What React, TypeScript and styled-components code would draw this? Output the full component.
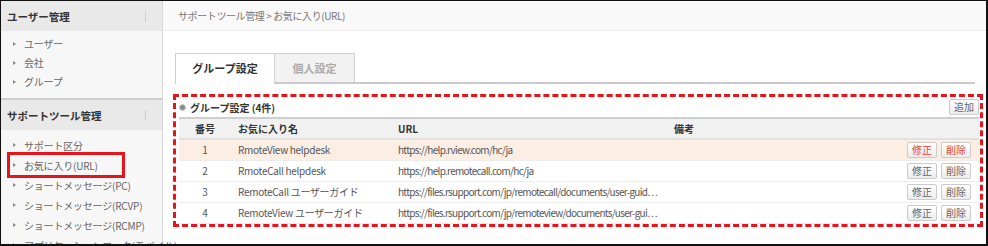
import styled, { createGlobalStyle } from 'styled-components';

const GlobalStyle = createGlobalStyle`
  html, body {
    margin: 0;
    padding: 0;
    background: #fff;
  }
  body {
    font-family: "Noto Sans CJK JP", "Noto Sans", sans-serif;
  }
`;

const Frame = styled.div`
  width: 988px;
  height: 246px;
  box-sizing: border-box;
  border: 1px solid #111;
  border-right-width: 2px;
  border-bottom-width: 2px;
  display: flex;
  overflow: hidden;
  background: #fff;
`;

const Sidebar = styled.aside`
  width: 162px;
  flex: none;
  box-sizing: border-box;
  background: #f7f7f7;
  border-right: 1px solid #d9d9d9;
`;

const SideHeader = styled.div<{ $divided?: boolean }>`
  height: 30px;
  display: flex;
  align-items: center;
  justify-content: space-between;
  padding: 0 16px 0 6px;
  background: #e9e9e9;
  border-top: ${({ $divided }) => ($divided ? '2px solid #cdcdcd' : 'none')};
  font-size: 10.5px;
  font-weight: 700;
  color: #333;
`;

const Tick = styled.span`
  width: 1px;
  height: 11px;
  background: #cfcfcf;
`;

const SideList = styled.ul<{ $top: number; $bottom: number }>`
  list-style: none;
  margin: 0;
  padding: ${({ $top, $bottom }) => `${$top}px 0 ${$bottom}px`};
`;

const SideItem = styled.li<{ $h: number; $marked?: boolean }>`
  display: flex;
  align-items: center;
  gap: 8px;
  height: ${({ $h }) => $h}px;
  margin-left: 9px;
  padding-left: 3px;
  width: ${({ $marked }) => ($marked ? '112px' : 'auto')};
  box-sizing: border-box;
  outline: ${({ $marked }) => ($marked ? '3px solid #e8141b' : 'none')};
  font-size: 10px;
  letter-spacing: -0.2px;
  color: #666;
  white-space: nowrap;
`;

const Arrow = styled.span`
  width: 0;
  height: 0;
  border-left: 3px solid #888;
  border-top: 2.5px solid transparent;
  border-bottom: 2.5px solid transparent;
`;

const Main = styled.main`
  flex: 1;
  display: flex;
  flex-direction: column;
  min-width: 0;
`;

const Breadcrumb = styled.div`
  height: 29px;
  flex: none;
  display: flex;
  align-items: center;
  padding-left: 15px;
  background: #f9f9f9;
  border-bottom: 1px solid #ececec;
  font-size: 10px;
  letter-spacing: -0.4px;
  color: #777;
`;

const Content = styled.div`
  padding: 22px 3px 0 10px;
`;

const Tabs = styled.div`
  display: flex;
  margin: 0 8px 0 2px;
  border-bottom: 2px solid #cacaca;
`;

const Tab = styled.div<{ $active?: boolean }>`
  box-sizing: border-box;
  width: ${({ $active }) => ($active ? '100px' : '80px')};
  height: ${({ $active }) => ($active ? '31px' : '29px')};
  display: flex;
  align-items: center;
  justify-content: center;
  border: 1px solid #cfcfcf;
  border-bottom: none;
  border-left-width: ${({ $active }) => ($active ? '1px' : '0')};
  background: ${({ $active }) => ($active ? '#fff' : '#f2f2f2')};
  margin-bottom: ${({ $active }) => ($active ? '-2px' : '0')};
  padding-bottom: ${({ $active }) => ($active ? '2px' : '0')};
  font-size: 11px;
  font-weight: 700;
  color: ${({ $active }) => ($active ? '#333' : '#aaa')};
`;

const Section = styled.section`
  margin-top: 10px;
  border: 3px dashed #e8141b;
  padding: 0 1px 0 3px;
`;

const TitleRow = styled.div`
  height: 20px;
  display: flex;
  align-items: center;
  justify-content: space-between;
`;

const Title = styled.div`
  display: flex;
  align-items: center;
  gap: 4px;
  font-size: 10px;
  font-weight: 700;
  color: #333;
`;

const Bullet = styled.span`
  width: 5px;
  height: 5px;
  border-radius: 50%;
  background: #8a8a8a;
  border: 1px solid #cdcdcd;
`;

const SmallButton = styled.button<{ $danger?: boolean }>`
  height: 16px;
  width: 30px;
  padding: 0;
  box-sizing: border-box;
  border: 1px solid #cbcbcb;
  border-radius: 2px;
  background: linear-gradient(#ffffff, #ececec);
  font-family: inherit;
  font-size: 10px;
  line-height: 14px;
  color: ${({ $danger }) => ($danger ? '#e8453c' : '#666')};
  cursor: pointer;
`;

const Table = styled.table`
  width: 800px;
  border-collapse: collapse;
  table-layout: fixed;
  font-size: 10px;
`;

const HeadRow = styled.tr`
  height: 21px;
  background: #f1f1f1;
  border-top: 2px solid #cfcfcf;
  border-bottom: 2px solid #e2e2e2;
`;

const Th = styled.th<{ $center?: boolean }>`
  padding: 0 0 0 ${({ $center }) => ($center ? '0' : '7px')};
  text-align: ${({ $center }) => ($center ? 'center' : 'left')};
  font-weight: 700;
  color: #333;
`;

const Row = styled.tr<{ $hot?: boolean }>`
  height: 21px;
  background: ${({ $hot }) => ($hot ? '#fdeee4' : '#fff')};
  border-bottom: 1px solid #ededed;
`;

const Td = styled.td<{ $center?: boolean; $tight?: number }>`
  padding: 0 0 0 ${({ $center }) => ($center ? '0' : '7px')};
  text-align: ${({ $center }) => ($center ? 'center' : 'left')};
  letter-spacing: ${({ $tight }) => ($tight ? `-${$tight}px` : 'normal')};
  color: #555;
  white-space: nowrap;
  overflow: hidden;
  text-overflow: ellipsis;
`;

const ActionCell = styled.td`
  padding: 0 8px 0 0;
  text-align: right;
`;

const Actions = styled.div`
  display: inline-flex;
  gap: 4px;
  vertical-align: middle;
`;

const favorites = [
  { no: 1, name: 'RmoteView helpdesk', url: 'https://help.rview.com/hc/ja' },
  { no: 2, name: 'RmoteCall helpdesk', url: 'https://help.remotecall.com/hc/ja' },
  {
    no: 3,
    name: 'RemoteCall ユーザーガイド',
    url: 'https://files.rsupport.com/jp/remotecall/documents/user-guid…',
  },
  {
    no: 4,
    name: 'RemoteView ユーザーガイド',
    url: 'https://files.rsupport.com/jp/remoteview/documents/user-gui…',
  },
];

export default function App() {
  return (
    <>
      <GlobalStyle />
      <Frame>
        <Sidebar>
          <SideHeader>
            ユーザー管理
            <Tick />
          </SideHeader>
          <SideList $top={3} $bottom={7}>
            {['ユーザー', '会社', 'グループ'].map((label) => (
              <SideItem key={label} $h={19}>
                <Arrow />
                {label}
              </SideItem>
            ))}
          </SideList>
          <SideHeader $divided>
            サポートツール管理
            <Tick />
          </SideHeader>
          <SideList $top={5} $bottom={0}>
            {[
              'サポート区分',
              'お気に入り(URL)',
              'ショートメッセージ(PC)',
              'ショートメッセージ(RCVP)',
              'ショートメッセージ(RCMP)',
              'アプリケーションロック(モバイル)',
            ].map((label) => (
              <SideItem key={label} $h={20} $marked={label === 'お気に入り(URL)'}>
                <Arrow />
                {label}
              </SideItem>
            ))}
          </SideList>
        </Sidebar>
        <Main>
          <Breadcrumb>サポートツール管理 &gt; お気に入り(URL)</Breadcrumb>
          <Content>
            <Tabs>
              <Tab $active>グループ設定</Tab>
              <Tab>個人設定</Tab>
            </Tabs>
            <Section>
              <TitleRow>
                <Title>
                  <Bullet />
                  グループ設定 (4件)
                </Title>
                <SmallButton>追加</SmallButton>
              </TitleRow>
              <Table>
                <colgroup>
                  <col style={{ width: 52 }} />
                  <col style={{ width: 160 }} />
                  <col style={{ width: 276 }} />
                  <col style={{ width: 232 }} />
                  <col style={{ width: 80 }} />
                </colgroup>
                <thead>
                  <HeadRow>
                    <Th $center>番号</Th>
                    <Th>お気に入り名</Th>
                    <Th>URL</Th>
                    <Th>備考</Th>
                    <Th />
                  </HeadRow>
                </thead>
                <tbody>
                  {favorites.map((f) => (
                    <Row key={f.no} $hot={f.no === 1}>
                      <Td $center>{f.no}</Td>
                      <Td $tight={0.3}>{f.name}</Td>
                      <Td $tight={0.7}>{f.url}</Td>
                      <Td />
                      <ActionCell>
                        <Actions>
                          <SmallButton $danger={f.no === 1}>修正</SmallButton>
                          <SmallButton $danger={f.no === 1}>削除</SmallButton>
                        </Actions>
                      </ActionCell>
                    </Row>
                  ))}
                </tbody>
              </Table>
            </Section>
          </Content>
        </Main>
      </Frame>
    </>
  );
}
